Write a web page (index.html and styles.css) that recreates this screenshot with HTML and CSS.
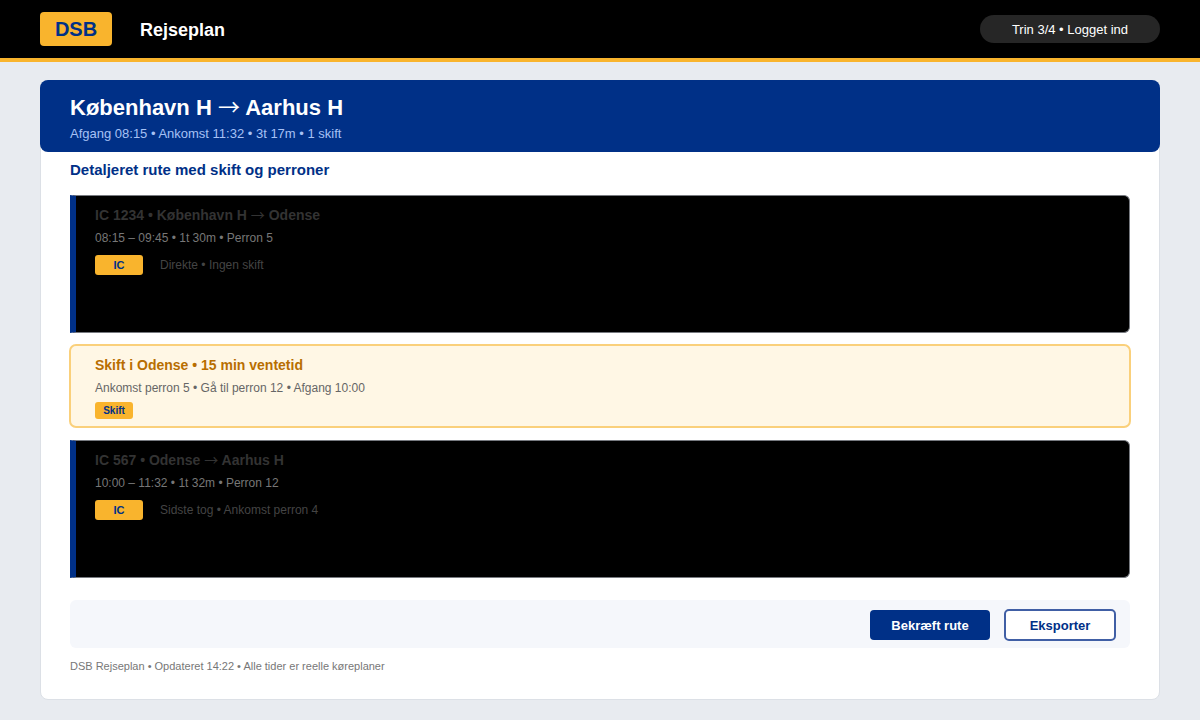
FILE: index.html
```
<!DOCTYPE html>
<html lang="da">
<head>
  <meta charset="UTF-8" />
  <meta name="viewport" content="width=device-width, initial-scale=1.0"/>
  <title>DSB Rejseplan</title>
  <link rel="stylesheet" href="styles.css">
</head>
<body>

  <header class="topbar">
    <div class="logo">DSB</div>
    <div class="app-name">Rejseplan</div>
    <div class="status">Trin 3/4 • Logget ind</div>
  </header>

  <main class="page">
    <div class="card">
      <div class="trip-header">
        <h1>København H <span class="arrow">→</span> Aarhus H</h1>
        <p>Afgang 08:15 • Ankomst 11:32 • 3t 17m • 1 skift</p>
      </div>

      <div class="card-body">
        <h2>Detaljeret rute med skift og perroner</h2>

        <div class="route">
          <section class="leg">
            <h3>IC 1234 • København H <span class="arrow">→</span> Odense</h3>
            <p class="times">08:15 – 09:45 • 1t 30m • Perron 5</p>
            <div class="leg-info">
              <span class="badge">IC</span>
              <span class="note">Direkte • Ingen skift</span>
            </div>
          </section>

          <section class="transfer">
            <h3>Skift i Odense • 15 min ventetid</h3>
            <p class="times">Ankomst perron 5 • Gå til perron 12 • Afgang 10:00</p>
            <span class="badge badge-small">Skift</span>
          </section>

          <section class="leg">
            <h3>IC 567 • Odense <span class="arrow">→</span> Aarhus H</h3>
            <p class="times">10:00 – 11:32 • 1t 32m • Perron 12</p>
            <div class="leg-info">
              <span class="badge">IC</span>
              <span class="note">Sidste tog • Ankomst perron 4</span>
            </div>
          </section>
        </div>

        <div class="actions">
          <button type="button" class="btn btn-primary">Bekræft rute</button>
          <button type="button" class="btn btn-outline">Eksporter</button>
        </div>

        <p class="footnote">DSB Rejseplan • Opdateret 14:22 • Alle tider er reelle køreplaner</p>
      </div>
    </div>
  </main>

</body>
</html>
```

FILE: styles.css
```
* {
  box-sizing: border-box;
}

body {
  margin: 0;
  background: #e8ebf0;
  color: #333;
  font-family: "Liberation Sans", Arial, Helvetica, sans-serif;
}

h1, h2, h3, p {
  margin: 0;
}

/* top bar */
.topbar {
  display: flex;
  align-items: center;
  height: 62px;
  padding: 0 40px;
  background: #000;
  border-bottom: 4px solid #f9b42d;
}

.logo {
  width: 72px;
  background: #f9b42d;
  color: #003087;
  border-radius: 4px;
  font-size: 20px;
  font-weight: bold;
  line-height: 34px;
  text-align: center;
}

.app-name {
  margin-left: 28px;
  padding-top: 2px;
  color: white;
  font-size: 18px;
  font-weight: bold;
  line-height: 34px;
}

.status {
  margin-left: auto;
  padding: 2px 32px 0;
  background: #262626;
  color: white;
  border-radius: 14px;
  font-size: 13px;
  line-height: 26px;
}

/* card */
.page {
  padding: 18px 40px 20px;
}

.card {
  background: white;
  border: 1px solid #dce0e6;
  border-radius: 8px;
}

.trip-header {
  margin: -1px -1px 0;
  padding: 13px 30px 7px;
  background: #003087;
  border-radius: 8px;
}

.trip-header h1 {
  color: white;
  font-size: 22px;
  line-height: 30px;
}

.trip-header p {
  color: #a6c1f5;
  font-size: 13px;
  line-height: 22px;
}

/* thin, full-width arrow between stations */
.arrow {
  font-family: "Noto Sans CJK JP", sans-serif;
  font-weight: normal;
  line-height: 1;
}

.card-body {
  padding: 8px 29px 25px;
}

.card-body h2 {
  margin-bottom: 15px;
  color: #003087;
  font-size: 15px;
  line-height: 20px;
}

/* route */
.route {
  display: flex;
  flex-direction: column;
  gap: 12px;
}

.route h3 {
  font-size: 14px;
  line-height: 20px;
}

.times {
  margin-top: 3px;
  color: #666;
  font-size: 12px;
  line-height: 20px;
}

.leg {
  min-height: 138px;
  padding: 9px 19px;
  background: #000;
  border: 1px solid #777a80;
  border-left: 6px solid #003087;
  border-radius: 0 6px 6px 0;
}

.leg .times {
  color: #777;
}

.leg-info {
  display: flex;
  align-items: center;
  gap: 17px;
  margin-top: 7px;
}

.note {
  color: #444;
  font-size: 12px;
}

.badge {
  width: 48px;
  background: #f9b42d;
  color: #003087;
  border-radius: 3px;
  font-size: 11px;
  font-weight: bold;
  line-height: 20px;
  text-align: center;
}

.badge-small {
  display: block;
  width: 38px;
  margin-top: 4px;
  font-size: 10px;
  line-height: 17px;
}

.transfer {
  margin: -1px -1px 0;
  padding: 9px 24px 7px;
  background: #fff7e5;
  border: 2px solid #fad07b;
  border-radius: 7px;
}

.transfer h3 {
  color: #b86e00;
}

/* actions */
.actions {
  display: flex;
  justify-content: flex-end;
  align-items: center;
  gap: 14px;
  height: 48px;
  margin-top: 22px;
  padding: 2px 14px 0;
  background: #f5f7fb;
  border-radius: 6px;
}

.btn {
  padding: 0;
  border: none;
  font-family: inherit;
  font-size: 13px;
  font-weight: bold;
  cursor: pointer;
}

.btn-primary {
  width: 120px;
  height: 30px;
  background: #003087;
  color: white;
  border-radius: 4px;
}

.btn-outline {
  width: 112px;
  height: 32px;
  background: white;
  color: #003087;
  border: 2px solid #405fa5;
  border-radius: 5px;
}

.footnote {
  margin-top: 10px;
  color: #777;
  font-size: 11px;
  line-height: 16px;
}
```
